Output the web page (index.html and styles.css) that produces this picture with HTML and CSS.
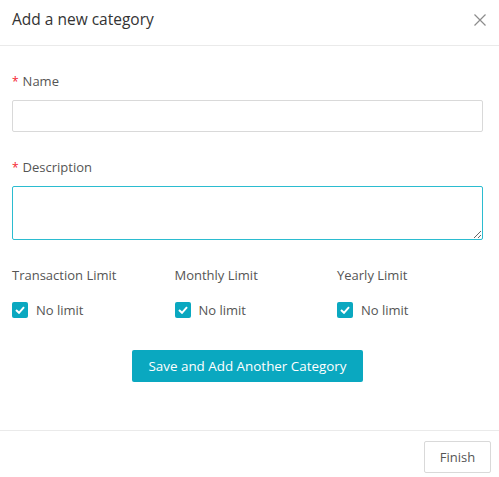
FILE: index.html
```html
<!DOCTYPE html>
<html>
<head>
<meta charset="utf-8">
<link rel="stylesheet" href="styles.css">
</head>
<body>
<div class="modal">
  <div class="modal-header">
    <div class="modal-title">Add a new category</div>
    <button class="close" aria-label="Close">
      <svg width="12" height="12" viewBox="0 0 12 12"><path d="M0.5 0.5 L11.5 11.5 M11.5 0.5 L0.5 11.5" stroke="#8c8c8c" stroke-width="1.2" fill="none"/></svg>
    </button>
  </div>
  <div class="modal-body">
    <div class="field">
      <label class="label"><span class="req">*</span>Name</label>
      <input class="input" type="text">
    </div>
    <div class="field">
      <label class="label"><span class="req">*</span>Description</label>
      <textarea class="textarea"></textarea>
    </div>
    <div class="limits">
      <div class="limit">
        <div class="limit-label">Transaction Limit</div>
        <label class="check"><span class="box"><svg width="10" height="8" viewBox="0 0 10 8"><path d="M1 4 L4 6.8 L9 1.2" stroke="#fff" stroke-width="2" fill="none"/></svg></span>No limit</label>
      </div>
      <div class="limit">
        <div class="limit-label">Monthly Limit</div>
        <label class="check"><span class="box"><svg width="10" height="8" viewBox="0 0 10 8"><path d="M1 4 L4 6.8 L9 1.2" stroke="#fff" stroke-width="2" fill="none"/></svg></span>No limit</label>
      </div>
      <div class="limit">
        <div class="limit-label">Yearly Limit</div>
        <label class="check"><span class="box"><svg width="10" height="8" viewBox="0 0 10 8"><path d="M1 4 L4 6.8 L9 1.2" stroke="#fff" stroke-width="2" fill="none"/></svg></span>No limit</label>
      </div>
    </div>
    <div class="actions">
      <button class="primary">Save and Add Another Category</button>
    </div>
  </div>
  <div class="modal-footer">
    <button class="secondary">Finish</button>
  </div>
</div>
</body>
</html>
```
FILE: styles.css
```css
* { box-sizing: border-box; }
html, body { margin: 0; padding: 0; background: #fff; }
body {
  font-family: "Open Sans", "Noto Sans", sans-serif;
  font-size: 13px;
  color: #555;
}
.modal { width: 499px; }
.modal-header {
  height: 46px;
  border-bottom: 1px solid #eaeaea;
  display: flex;
  align-items: flex-start;
  justify-content: space-between;
  padding: 8px 13px 0 12px;
}
.modal-title { font-size: 15.5px; line-height: 22px; color: #333; }
.close { background: none; border: 0; padding: 0; margin-top: 6px; display: flex; cursor: pointer; }
.modal-body { padding: 25px 16px 48px 12px; }
.field { margin-bottom: 25px; }
.label { display: block; font-size: 13px; color: #555; margin-bottom: 8px; line-height: 20px; }
.req { color: #f5222d; margin-right: 4px; font-size: 12px; }
.input {
  display: block; width: 100%; height: 32px;
  border: 1px solid #d9d9d9; border-radius: 2px; outline: none;
}
.textarea {
  display: block; width: 100%; height: 54px;
  border: 1px solid #2bbcd0; border-radius: 2px; outline: none; resize: vertical;
}
.limits { display: flex; }
.limit { flex: 0 0 162.5px; }
.limit-label { line-height: 20px; margin-bottom: 15px; }
.check { display: flex; align-items: center; gap: 8px; line-height: 20px; }
.box {
  width: 16px; height: 16px; border-radius: 2px; background: #0aa8c0;
  display: flex; align-items: center; justify-content: center;
}
.actions { display: flex; justify-content: center; margin-top: 30px; }
.primary {
  width: 231px; height: 32px; border: 0; border-radius: 2px;
  background: #0aa8c0; color: #fff;
  font-family: inherit; font-size: 13.4px;
}
.modal-footer {
  border-top: 1px solid #eaeaea;
  display: flex; justify-content: flex-end;
  padding: 10px 8px 5px 0;
}
.secondary {
  width: 67px; height: 32px; background: #fff;
  border: 1px solid #d9d9d9; border-radius: 2px;
  color: #555; font-family: inherit; font-size: 13px;
}
```
